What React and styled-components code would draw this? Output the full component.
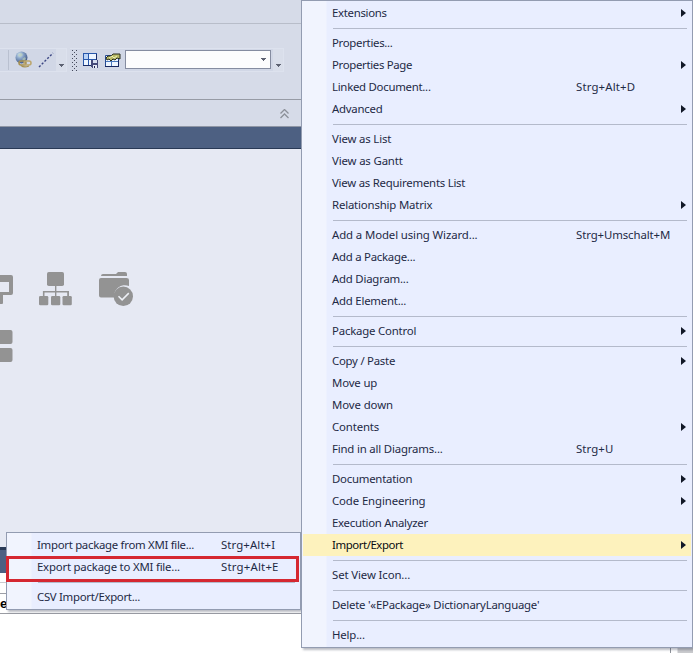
import React from 'react';
import styled, { createGlobalStyle } from 'styled-components';

const GlobalStyle = createGlobalStyle`
  * { box-sizing: border-box; }
  body { margin: 0; overflow: hidden; font-family: "Noto Sans", "Open Sans", sans-serif; }
  svg { display: block; flex: none; }
`;

const Screen = styled.div`
  position: relative;
  width: 693px;
  height: 653px;
  overflow: hidden;
  display: flex;
  flex-direction: column;
  background: #fff;
`;
const RibbonTop = styled.div`
  height: 24px;
  flex: none;
  background: #d6dbe8;
  border-bottom: 1px solid #b8bdc9;
`;
const ToolbarArea = styled.div`
  height: 76px;
  flex: none;
  padding-top: 24px;
  background: #d6dbe8;
  border-bottom: 1px solid #979ba5;
`;
const Toolbars = styled.div`
  display: flex;
  gap: 3px;
  height: 24px;
`;
const Toolbar = styled.div`
  display: flex;
  align-items: center;
  width: ${(p) => p.$width}px;
  height: 24px;
  background: #d1d7e6;
  border: solid #dde2ee;
  border-width: 1px 1px 1px 0;
`;
const Divider = styled.div`
  width: 1px;
  height: 20px;
  margin: 0 6px 0 8px;
  background: #b9c0d0;
`;
const Overflow = styled.div`
  display: flex;
  align-items: flex-end;
  justify-content: center;
  width: 10px;
  height: 22px;
  padding-bottom: 4px;
  margin-left: auto;
  background: #d9deea;
`;
const Grip = styled.div`
  width: 6px;
  height: 21px;
  margin: 0 5px 0 2px;
  background-image: radial-gradient(circle at 0.5px 0.5px, #464b5d 0.7px, transparent 0.8px),
    radial-gradient(circle at 2.5px 2.5px, #464b5d 0.7px, transparent 0.8px);
  background-size: 4px 4px;
`;
const IconSlot = styled.div`
  flex: none;
  width: ${(p) => p.$width || 22}px;
`;
const ComboBox = styled.div`
  display: flex;
  align-items: center;
  justify-content: flex-end;
  width: 146px;
  height: 19px;
  margin-bottom: 1px;
  padding: 0 4px 0 0;
  background: #fcfcfd;
  border: 1px solid #858ca0;
`;
const CollapseBar = styled.div`
  display: flex;
  align-items: center;
  height: 27px;
  flex: none;
  padding: 2px 0 0 280px;
  background: #d6dbe8;
  border-bottom: 1px solid #8f96a5;
`;
const TitleStrip = styled.div`
  height: 22px;
  flex: none;
  background: #4d6082;
  border-bottom: 1px solid #293955;
`;
const Canvas = styled.div`
  height: 398px;
  flex: none;
  background: #e6e9f3;
  padding-top: 121px;
`;
const IconRow = styled.div`
  display: flex;
  height: 60px;
`;
const PanelHeader = styled.div`
  height: 26px;
  flex: none;
  background: #4d6082;
  border-top: 3px solid #293955;
`;
const PanelRow = styled.div`
  height: ${(p) => p.$height}px;
  flex: none;
  background: ${(p) => p.$bg || '#fff'};
  border-bottom: 1px solid ${(p) => p.$line};
  color: #000;
  font: bold 13px/20px "Liberation Sans", sans-serif;
`;
const Bottom = styled.div`
  flex: 1;
  display: flex;
  justify-content: flex-end;
  background: #fff;
`;
const ScrollEdge = styled.div`
  width: 23px;
  border-left: 1px solid #8e9299;
  background: linear-gradient(90deg, #fff 6px, #c9cacd 7px);
`;

const Menu = styled.div`
  position: absolute;
  left: ${(p) => p.$left}px;
  top: ${(p) => p.$top}px;
  width: ${(p) => p.$width}px;
  padding: 1px;
  border: 1px solid #939cb1;
  background: linear-gradient(90deg, #f1f4fe 24px, #e9eeff 25px);
  box-shadow: 2px 2px 2px rgba(60, 65, 85, 0.35);
`;
const MenuItem = styled.div`
  display: flex;
  align-items: center;
  height: 22px;
  padding: 0 5px 0 ${(p) => p.$indent}px;
  background: ${(p) => (p.$active ? '#fdf2bd' : 'transparent')};
  color: ${(p) => (p.$active ? '#080b12' : '#1e2a45')};
  font-size: 11.4px;
  line-height: 22px;
  white-space: nowrap;
`;
const Label = styled.span`
  width: ${(p) => p.$width}px;
  letter-spacing: ${(p) => p.$spacing || 0}px;
`;
const Shortcut = styled.span`
  letter-spacing: ${(p) => p.$spacing || 0}px;
`;
const Arrow = styled.span`
  width: 0;
  height: 0;
  margin-left: auto;
  margin-bottom: 1px;
  border: solid transparent;
  border-width: 4px 0 4px 5px;
  border-left-color: #111827;
`;
const Separator = styled.div`
  height: 8px;
  margin: 0 4px 0 ${(p) => p.$indent + 1}px;
  padding-top: 4px;
  &::after {
    content: '';
    display: block;
    height: 1px;
    background: #b4bacb;
  }
`;
const Highlight = styled.div`
  position: absolute;
  left: 6px;
  top: 556px;
  width: 293px;
  height: 26px;
  border: 3px solid #d52731;
`;

const mainItems = [
  { t: 'Extensions', s: -0.3, sub: true }, null,
  { t: 'Properties...', s: -0.3 },
  { t: 'Properties Page', s: -0.33, sub: true },
  { t: 'Linked Document...', s: -0.27, k: 'Strg+Alt+D', ks: 0.15 },
  { t: 'Advanced', s: -0.25, sub: true }, null,
  { t: 'View as List', s: -0.17 },
  { t: 'View as Gantt', s: -0.15 },
  { t: 'View as Requirements List', s: -0.24 },
  { t: 'Relationship Matrix', s: -0.18, sub: true }, null,
  { t: 'Add a Model using Wizard...', s: -0.11, k: 'Strg+Umschalt+M', ks: -0.1 },
  { t: 'Add a Package...', s: -0.26 },
  { t: 'Add Diagram...', s: -0.22 },
  { t: 'Add Element...', s: -0.23 }, null,
  { t: 'Package Control', s: -0.2, sub: true }, null,
  { t: 'Copy / Paste', s: -0.25, sub: true },
  { t: 'Move up', s: -0.14 },
  { t: 'Move down', s: -0.1 },
  { t: 'Contents', s: -0.15, sub: true },
  { t: 'Find in all Diagrams...', s: -0.18, k: 'Strg+U', ks: 0.08 }, null,
  { t: 'Documentation', s: -0.24, sub: true },
  { t: 'Code Engineering', s: -0.12, sub: true },
  { t: 'Execution Analyzer', s: -0.28 },
  { t: 'Import/Export', s: -0.43, sub: true, active: true }, null,
  { t: 'Set View Icon...', s: -0.12 }, null,
  { t: "Delete '«EPackage» DictionaryLanguage'", s: -0.23 }, null,
  { t: 'Help...', s: -0.15 },
];
const subItems = [
  { t: 'Import package from XMI file...', s: -0.29, k: 'Strg+Alt+I', ks: 0.1 },
  { t: 'Export package to XMI file...', s: -0.21, k: 'Strg+Alt+E', ks: 0.2 }, null,
  { t: 'CSV Import/Export...', s: -0.3 },
];

function MenuList({ items, indent, labelWidth }) {
  return items.map((it, i) =>
    it ? (
      <MenuItem key={i} $indent={indent} $active={it.active}>
        <Label $width={labelWidth} $spacing={it.s}>{it.t}</Label>
        {it.k && <Shortcut $spacing={it.ks}>{it.k}</Shortcut>}
        {it.sub && <Arrow />}
      </MenuItem>
    ) : (
      <Separator key={i} $indent={indent} />
    )
  );
}

const DownArrow = () => (
  <svg width="5" height="3" shapeRendering="crispEdges"><path d="M0 0h5v1H4v1H3v1H2V2H1V1H0z" fill="#5d6272" /></svg>
);

const GlobeLink = () => (
  <svg width="17" height="18" viewBox="0 0 17 18">
    <defs>
      <radialGradient id="globe" cx="35%" cy="28%" r="75%">
        <stop offset="0" stopColor="#d5e7ed" /><stop offset=".4" stopColor="#8aa5c9" /><stop offset="1" stopColor="#405786" />
      </radialGradient>
    </defs>
    <circle cx="6.5" cy="6.5" r="6" fill="url(#globe)" />
    <path d="M3 4l3-2 2 2-3 2zM7 8l3-2 1 2-2 2z" fill="#b9cdb9" opacity=".7" />
    <rect x="4" y="10" width="7" height="4" rx="2" fill="none" stroke="#a6904f" strokeWidth="1.5" />
    <rect x="9" y="10" width="7" height="4" rx="2" fill="none" stroke="#bca66c" strokeWidth="1.5" />
    <path d="M6 14.5q3 2.5 8 .5" fill="none" stroke="#a6904f" strokeWidth="1.2" />
  </svg>
);
const DashedLine = () => (
  <svg width="16" height="16"><path d="M1 15L15 1" stroke="#3b4683" strokeWidth="1.4" strokeDasharray="2.2 1.7" /></svg>
);
const SaveGrid = () => (
  <svg width="16" height="15" viewBox="0 0 16 15" shapeRendering="crispEdges">
    <path d="M0 0h14v13H0z" fill="#2857ab" />
    <path d="M1 1h4v5H1z" fill="#bad3f6" />
    <path d="M6 1h7v5H6zM1 7h4v5H1zM6 7h7v5H6z" fill="#edf5ff" />
    <path d="M13 1h1v12H0v-1h13z" fill="#1b2d67" />
    <path d="M8 7h7v8H9v-1H8z" fill="#454a7a" />
    <path d="M10 7h4v3h-4z" fill="#d8dff0" /><path d="M10 12h4v3h-4z" fill="#e9edf8" /><path d="M11 13h1v2h-1z" fill="#20254f" />
  </svg>
);
const EditGrid = () => (
  <svg width="16" height="15" viewBox="0 0 16 15">
    <path d="M.5 2.5h13v11H.5z" fill="#edf5ff" stroke="#244991" />
    <path d="M6.5 7v6M1 8.5h12" stroke="#4878be" />
    <path d="M0 13.5h14M13.5 7v7" stroke="#17275f" />
    <path d="M1 5l2-2h3l2-2h4l3 0v5l-3-1-2 2-2-1-2 2-2-2-2 1z" fill="#b7b966" stroke="#292d1e" />
    <path d="M4 5l3-2 2 2 3-2" fill="none" stroke="#eef1b1" strokeWidth="1" />
  </svg>
);
const Chevrons = () => (
  <svg width="9" height="10" viewBox="0 0 9 10"><path d="M.5 4.5l4-4 4 4M.5 9l4-4 4 4" fill="none" stroke="#8c9099" strokeWidth="1.3" /></svg>
);
const CanvasIcons = () => (
  <IconRow>
    <svg width="150" height="50" viewBox="0 0 150 50" fill="#939393">
      <path fillRule="evenodd" d="M0 5h11q2 0 2 2v16q0 2-2 2H3v8q0 1-1 1H0V22h9V12H0z" />
      <rect x="47" y="2" width="17" height="14" rx="1.8" />
      <path d="M55 15h1.4v6H69v5h-1.8v-3.5H56.4V26H55v-3.5H44.5V26h-1.6v-5H55z" />
      <rect x="39" y="26" width="9.3" height="9.3" rx="1.3" /><rect x="51" y="26" width="9.3" height="9.3" rx="1.3" /><rect x="62.5" y="26" width="9.3" height="9.3" rx="1.3" />
      <path d="M101 6q0-2 2-2h13l2-2h7q2 0 2 2v2z" />
      <path d="M99 10q0-2 2-2h25.500q2.500 0 2.500 2v6a11 11 0 0 0-15 11.500h-13q-2 0-2-2z" />
      <circle cx="123.300" cy="26.300" r="9.700" />
      <path d="M118.500 26.300l3.600 3.600 6.700-6.800" fill="none" stroke="#eef0f6" strokeWidth="1.500" />
    </svg>
  </IconRow>
);
const Blocks = () => (
  <svg width="14" height="33" fill="#939393"><path d="M0 0h10.500q2 0 2 2v10q0 2-2 2H0zM0 18h10.500q2 0 2 2v10q0 2-2 2H0z" /></svg>
);

export default function App() {
  return (
    <Screen>
      <GlobalStyle />
      <RibbonTop />
      <ToolbarArea>
        <Toolbars>
          <Toolbar $width={67}>
            <Divider />
            <IconSlot $width={23}><GlobeLink /></IconSlot>
            <IconSlot $width={16}><DashedLine /></IconSlot>
            <Overflow><DownArrow /></Overflow>
          </Toolbar>
          <Toolbar $width={214}>
            <Grip />
            <IconSlot><SaveGrid /></IconSlot>
            <IconSlot $width={20}><EditGrid /></IconSlot>
            <ComboBox><DownArrow /></ComboBox>
            <Overflow><DownArrow /></Overflow>
          </Toolbar>
        </Toolbars>
      </ToolbarArea>
      <CollapseBar><Chevrons /></CollapseBar>
      <TitleStrip />
      <Canvas>
        <CanvasIcons />
        <Blocks />
      </Canvas>
      <PanelHeader />
      <PanelRow $height={10} $line="#c9cad0" />
      <PanelRow $height={11} $line="#9c9fa8" />
      <PanelRow $height={20} $line="#9a9ca3">e</PanelRow>
      <Bottom><ScrollEdge /></Bottom>
      <Menu $left={6} $top={532} $width={295}>
        <MenuList items={subItems} indent={29} labelWidth={184} />
      </Menu>
      <Menu $left={301} $top={0} $width={392}>
        <MenuList items={mainItems} indent={29} labelWidth={244} />
      </Menu>
      <Highlight />
    </Screen>
  );
}
